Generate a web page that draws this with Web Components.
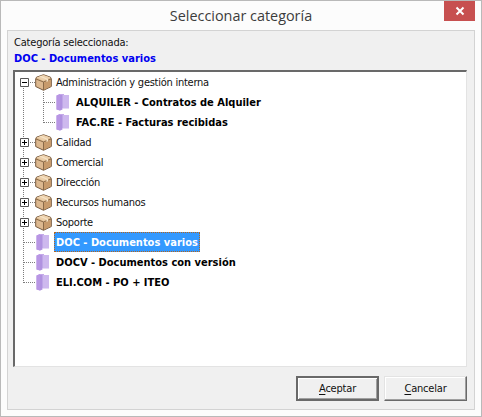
<!DOCTYPE html>
<html lang="es">
<head>
<meta charset="utf-8">
<title>Seleccionar categoría</title>
<style>
  html, body { margin: 0; padding: 0; background: #fcfcfc; }
  body { font: 11px "DejaVu Sans Condensed", "DejaVu Sans", sans-serif; }
</style>
</head>
<body>
<template id="package-icon">
  <svg width="17" height="17" viewBox="0 0 17 17">
    <path d="M8.500 .7 15.500 3.200 16.300 5v7.500L8.500 16.300 .7 12.500V5l.8-1.800z" fill="#dcb88f" stroke="#75583c"/>
    <path d="M1.500 3.600 8.500 7 15.500 3.600 8.500 1z" fill="#ecd0ab"/>
    <path d="M1 5l7.500 3L16 5" fill="none" stroke="#8a6a48"/>
    <path d="M8.500 8v8" stroke="#8a6a48"/>
    <path d="M9 8.600 15.800 5.800v6.400L9 15.500z" fill="#c79a6b"/>
    <path d="M4.500 2.400 11.500 5.600v2.200l1.500-.6V5L6 1.800z" fill="#f6e4c8"/>
  </svg>
</template>
<template id="book-icon">
  <svg width="16" height="18" viewBox="0 0 16 18">
    <path d="M1.500 2.500 5 1h4v13.500L5 17.500l-3.500-1z" fill="#c5a8ea"/>
    <path d="M1.500 2.500 5 1v16.500l-3.500-1z" fill="#b896e4"/>
    <path d="M6.500 2H14v13H6.500z" fill="#cdb8ee"/>
    <path d="M5 2h2.500v14.500L5 17.500z" fill="#b092e0"/>
    <path d="M7.500 15.500H14" fill="none" stroke="#e4d8f6"/>
  </svg>
</template>

<win-dialog heading="Seleccionar categoría">
  <cat-summary label="Categoría seleccionada:" value="DOC - Documentos varios"></cat-summary>
  <cat-tree>
    <tree-row guides="first" toggle="minus" icon="package">Administración y gestión interna</tree-row>
    <tree-row guides="pipe tee" icon="book" strong>ALQUILER - Contratos de Alquiler</tree-row>
    <tree-row guides="pipe last" icon="book" strong>FAC.RE - Facturas recibidas</tree-row>
    <tree-row guides="tee" toggle="plus" icon="package">Calidad</tree-row>
    <tree-row guides="tee" toggle="plus" icon="package">Comercial</tree-row>
    <tree-row guides="tee" toggle="plus" icon="package">Dirección</tree-row>
    <tree-row guides="tee" toggle="plus" icon="package">Recursos humanos</tree-row>
    <tree-row guides="tee" toggle="plus" icon="package">Soporte</tree-row>
    <tree-row guides="tee" icon="book" strong selected>DOC - Documentos varios</tree-row>
    <tree-row guides="tee" icon="book" strong>DOCV - Documentos con versión</tree-row>
    <tree-row guides="last" icon="book" strong>ELI.COM - PO + ITEO</tree-row>
  </cat-tree>
  <win-button slot="actions" default key="A" rest="ceptar"></win-button>
  <win-button slot="actions" key="C" rest="ancelar"></win-button>
</win-dialog>

<script>
class WinDialog extends HTMLElement {
  constructor() {
    super();
    this.attachShadow({ mode: "open" });
  }

  connectedCallback() {
    const heading = this.getAttribute("heading") || "";
    this.shadowRoot.innerHTML = `
      <style>
        :host {
          display: flex;
          flex-direction: column;
          box-sizing: border-box;
          width: 482px;
          height: 417px;
          border: 1px solid #b9b9b9;
          background: #fcfcfc;
          padding: 0 6px 6px;
        }
        .titlebar {
          flex: none;
          height: 29px;
          display: flex;
          margin: 0 -6px;
        }
        .title {
          width: 100%;
          text-align: center;
          padding-top: 5px;
          font: 14.400px/20px "Open Sans", sans-serif;
          color: #3c3c3c;
          margin-right: -37px;
        }
        .close {
          flex: none;
          width: 31px;
          height: 20px;
          margin-right: 6px;
          background: #c75050;
          display: flex;
          align-items: center;
          justify-content: center;
        }
        .panel {
          flex: 1;
          display: flex;
          flex-direction: column;
          border: 1px solid #d3d3d3;
          background: #f0f0f0;
          padding: 5px 7px 8px 5px;
          min-height: 0;
        }
        .actions {
          flex: none;
          display: flex;
          justify-content: flex-end;
          gap: 5px;
          margin-top: 9px;
        }
      </style>
      <div class="titlebar">
        <div class="title">${heading}</div>
        <div class="close">
          <svg width="10" height="10" viewBox="0 0 10 10"><path d="M1.500 1.500l7 7M8.500 1.500l-7 7" stroke="#fff" stroke-width="2"/></svg>
        </div>
      </div>
      <div class="panel">
        <slot></slot>
        <div class="actions"><slot name="actions"></slot></div>
      </div>
    `;
  }
}

class CatSummary extends HTMLElement {
  constructor() {
    super();
    this.attachShadow({ mode: "open" });
  }

  connectedCallback() {
    this.shadowRoot.innerHTML = `
      <style>
        :host { display: block; flex: none; height: 34px; padding-left: 1px; }
        .label { font: 11px/14px "DejaVu Sans Condensed", "DejaVu Sans", sans-serif; letter-spacing: -.2px; color: #111; }
        .value { font: bold 11px/14px "DejaVu Sans Condensed", "DejaVu Sans", sans-serif; color: #0000f0; margin-top: 2px; }
      </style>
      <div class="label">${this.getAttribute("label")}</div>
      <div class="value">${this.getAttribute("value")}</div>
    `;
  }
}

class CatTree extends HTMLElement {
  constructor() {
    super();
    this.attachShadow({ mode: "open" });
  }

  connectedCallback() {
    this.shadowRoot.innerHTML = `
      <style>
        :host {
          display: block;
          flex: 1;
          min-height: 0;
          box-sizing: border-box;
          width: 454px;
          background: #fff;
          border-style: solid;
          border-width: 2px 1px 1px 2px;
          border-color: #696969 #e3e3e3 #e3e3e3 #696969;
        }
      </style>
      <slot></slot>
    `;
  }
}

const DOTS_V = "repeating-linear-gradient(180deg,#7c7c7c 0 1px,transparent 1px 2px)";
const DOTS_H = "repeating-linear-gradient(90deg,#7c7c7c 0 1px,transparent 1px 2px)";

class TreeRow extends HTMLElement {
  constructor() {
    super();
    this.attachShadow({ mode: "open" });
  }

  connectedCallback() {
    const guides = (this.getAttribute("guides") || "").split(" ");
    const toggle = this.getAttribute("toggle");
    const icon = document.getElementById(this.getAttribute("icon") + "-icon");

    const cells = guides.map((kind, i) => {
      const own = i === guides.length - 1;
      const box = own && toggle
        ? `<span class="box"><svg width="9" height="9" viewBox="0 0 9 9"><path d="M.5.500h8v8h-8z" fill="#fff" stroke="#555"/><path d="M2 4.500h5${toggle === "plus" ? "M4.500 2v5" : ""}" stroke="#000"/></svg></span>`
        : "";
      return `<span class="cell ${kind}">${box}</span>`;
    }).join("");

    this.shadowRoot.innerHTML = `
      <style>
        :host { display: flex; align-items: center; height: 20px; }
        .cell {
          flex: none;
          width: 20px;
          height: 20px;
          display: flex;
          align-items: center;
          padding-left: 5px;
          box-sizing: border-box;
          background-repeat: no-repeat;
        }
        .cell.pipe { background-image: ${DOTS_V}; background-size: 1px 20px; background-position: 8px 0; }
        .cell.tee {
          background-image: ${DOTS_V}, ${DOTS_H};
          background-size: 1px 20px, 11px 1px;
          background-position: 8px 0, 9px 10px;
        }
        .cell.last {
          background-image: ${DOTS_V}, ${DOTS_H};
          background-size: 1px 11px, 11px 1px;
          background-position: 8px 0, 9px 10px;
        }
        .cell.first {
          background-image: ${DOTS_V}, ${DOTS_H};
          background-size: 1px 10px, 11px 1px;
          background-position: 8px 10px, 9px 10px;
        }
        .box { display: block; width: 9px; height: 9px; line-height: 0; margin-top: 1px; }
        .icon { flex: none; width: 17px; height: 18px; display: flex; align-items: center; }
        .text {
          margin-left: 2px;
          padding: 0 1px;
          height: 18px;
          border: 1px dotted transparent;
          font: 11px/20px "DejaVu Sans Condensed", "DejaVu Sans", sans-serif;
          letter-spacing: -.25px;
          color: #111;
          white-space: nowrap;
        }
        :host([strong]) .text {
          font-weight: bold;
          letter-spacing: 0;
          color: #000;
        }
        :host([selected]) .text {
          background: #3399ff;
          color: #fff;
          border-color: #b5651d;
        }
      </style>
      ${cells}
      <span class="icon"></span>
      <span class="text"><slot></slot></span>
    `;
    this.shadowRoot.querySelector(".icon").append(icon.content.cloneNode(true));
  }
}

class WinButton extends HTMLElement {
  constructor() {
    super();
    this.attachShadow({ mode: "open" });
  }

  connectedCallback() {
    this.shadowRoot.innerHTML = `
      <style>
        :host {
          display: flex;
          align-items: center;
          justify-content: center;
          box-sizing: border-box;
          width: 83px;
          height: 25px;
          background: #f0f0f0;
          border: 1px solid;
          border-color: #e3e3e3 #696969 #696969 #e3e3e3;
          box-shadow: inset -1px -1px 0 #a0a0a0, inset 1px 1px 0 #fff;
          font: 11px "DejaVu Sans Condensed", "DejaVu Sans", sans-serif;
          letter-spacing: -.2px;
          color: #111;
        }
        :host([default]) {
          border: 2px solid #696969;
          box-shadow: inset 1px 1px 0 #fff, inset -1px -1px 0 #a0a0a0;
        }
        u { text-underline-offset: 2px; }
      </style>
      <span><u>${this.getAttribute("key")}</u>${this.getAttribute("rest")}</span>
    `;
  }
}

customElements.define("win-dialog", WinDialog);
customElements.define("cat-summary", CatSummary);
customElements.define("cat-tree", CatTree);
customElements.define("tree-row", TreeRow);
customElements.define("win-button", WinButton);
</script>
</body>
</html>
